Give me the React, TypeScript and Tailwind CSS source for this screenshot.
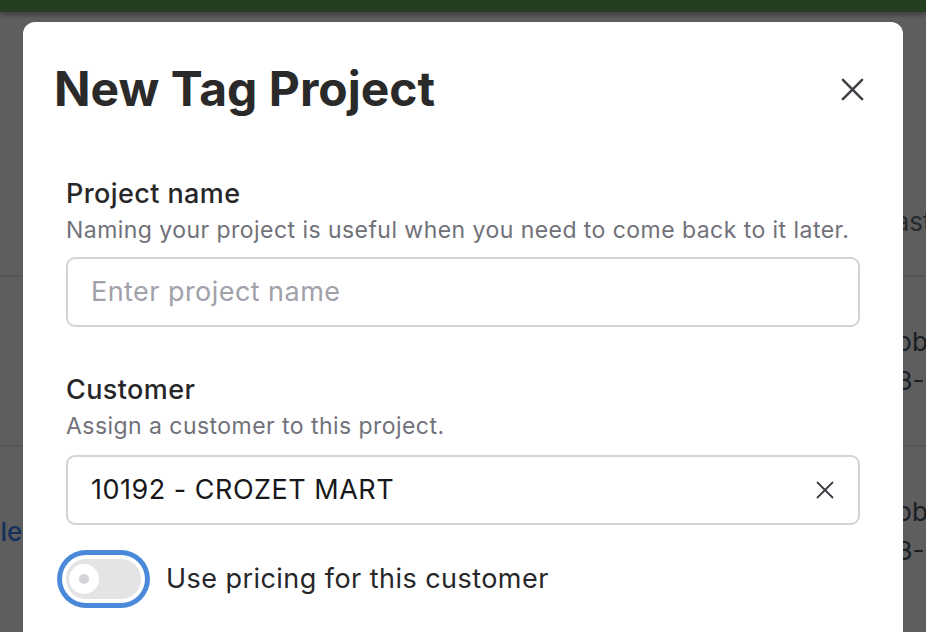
import React from "react";

function CloseIcon({ size, stroke }: { size: number; stroke: number }) {
  return (
    <svg width={size} height={size} viewBox="0 0 24 24" fill="none" stroke="currentColor" strokeWidth={stroke} strokeLinecap="round">
      <path d="M2 2L22 22" />
      <path d="M22 2L2 22" />
    </svg>
  );
}

function BackgroundPage() {
  return (
    <div className="flex flex-col">
      <div className="h-[12px] bg-[#64a85c] shadow-[0_3px_5px_rgba(0,0,0,0.35)]" />
      <div className="flex h-[263px] items-end justify-end pb-[34px] text-[26px] text-[#6b7280]">
        <span className="mr-[-74px] w-[120px] whitespace-nowrap">Last updated</span>
      </div>
      <div className="flex h-[170px] items-center justify-end border-t-2 border-[#e5e7eb] text-[26px]">
        <div className="mr-[-74px] flex w-[120px] flex-col whitespace-nowrap text-[#4b5563]">
          <span>Robb</span>
          <span>03-02-24</span>
        </div>
      </div>
      <div className="flex h-[170px] items-center justify-between border-t-2 border-[#e5e7eb] text-[26px]">
        <span className="ml-[-32px] font-medium text-[#3b82f6]">Title</span>
        <div className="mr-[-74px] flex w-[120px] flex-col whitespace-nowrap text-[#4b5563]">
          <span>Robb</span>
          <span>03-01-24</span>
        </div>
      </div>
    </div>
  );
}

export default function App() {
  return (
    <div className="relative h-[632px] w-[926px] overflow-hidden bg-white font-['Inter',sans-serif]">
      <BackgroundPage />
      <div className="absolute inset-0 bg-black/[0.63]" />

      <div className="absolute left-[23px] top-[22px] h-[660px] w-[880px] rounded-[12px] bg-white">
        <div className="flex items-start justify-between pl-[31px] pr-[39px] pt-[38px]">
          <h2 className="text-[48px] font-bold leading-[58px] text-[#2a2a2a]">New Tag Project</h2>
          <button className="mt-[18px] text-[#3f3f46]">
            <CloseIcon size={23} stroke={2.6} />
          </button>
        </div>

        <div className="flex flex-col px-[43px] pt-[60px]">
          <label className="text-[27px] font-medium leading-[32px] tracking-[0.4px] text-[#27272a]">Project name</label>
          <p className="mt-[6px] text-[23px] leading-[28px] tracking-[0.45px] text-[#71717a]">
            Naming your project is useful when you need to come back to it later.
          </p>
          <div className="mt-[13px] flex h-[70px] items-center rounded-[9px] border-2 border-[#d4d4d8] px-[23px]">
            <input
              className="w-full bg-transparent text-[27px] tracking-[0.45px] text-[#18181b] outline-none placeholder:text-[#a1a1aa]"
              placeholder="Enter project name"
            />
          </div>

          <label className="mt-[47px] text-[27px] font-medium leading-[32px] tracking-[0.4px] text-[#27272a]">Customer</label>
          <p className="mt-[6px] text-[23px] leading-[28px] tracking-[0.45px] text-[#71717a]">Assign a customer to this project.</p>
          <div className="mt-[15px] flex h-[70px] items-center justify-between rounded-[9px] border-2 border-[#d4d4d8] pl-[23px] pr-[24px]">
            <span className="text-[27px] tracking-[0.5px] text-[#18181b]">10192 - CROZET MART</span>
            <span className="text-[#3f3f46]">
              <CloseIcon size={18} stroke={2.4} />
            </span>
          </div>

          <div className="mt-[34px] flex items-center">
            <div className="flex h-[40px] w-[75px] items-center rounded-full bg-[#e4e4e7] ring-[5px] ring-[#4a88d9] ring-offset-4 ring-offset-white">
              <div className="ml-[3px] flex h-[30px] w-[30px] items-center justify-center rounded-full bg-white">
                <div className="h-[10px] w-[10px] rounded-full bg-[#d4d4d8]" />
              </div>
            </div>
            <span className="ml-[25px] text-[27px] tracking-[0.45px] text-[#27272a]">Use pricing for this customer</span>
          </div>
        </div>
      </div>
    </div>
  );
}
